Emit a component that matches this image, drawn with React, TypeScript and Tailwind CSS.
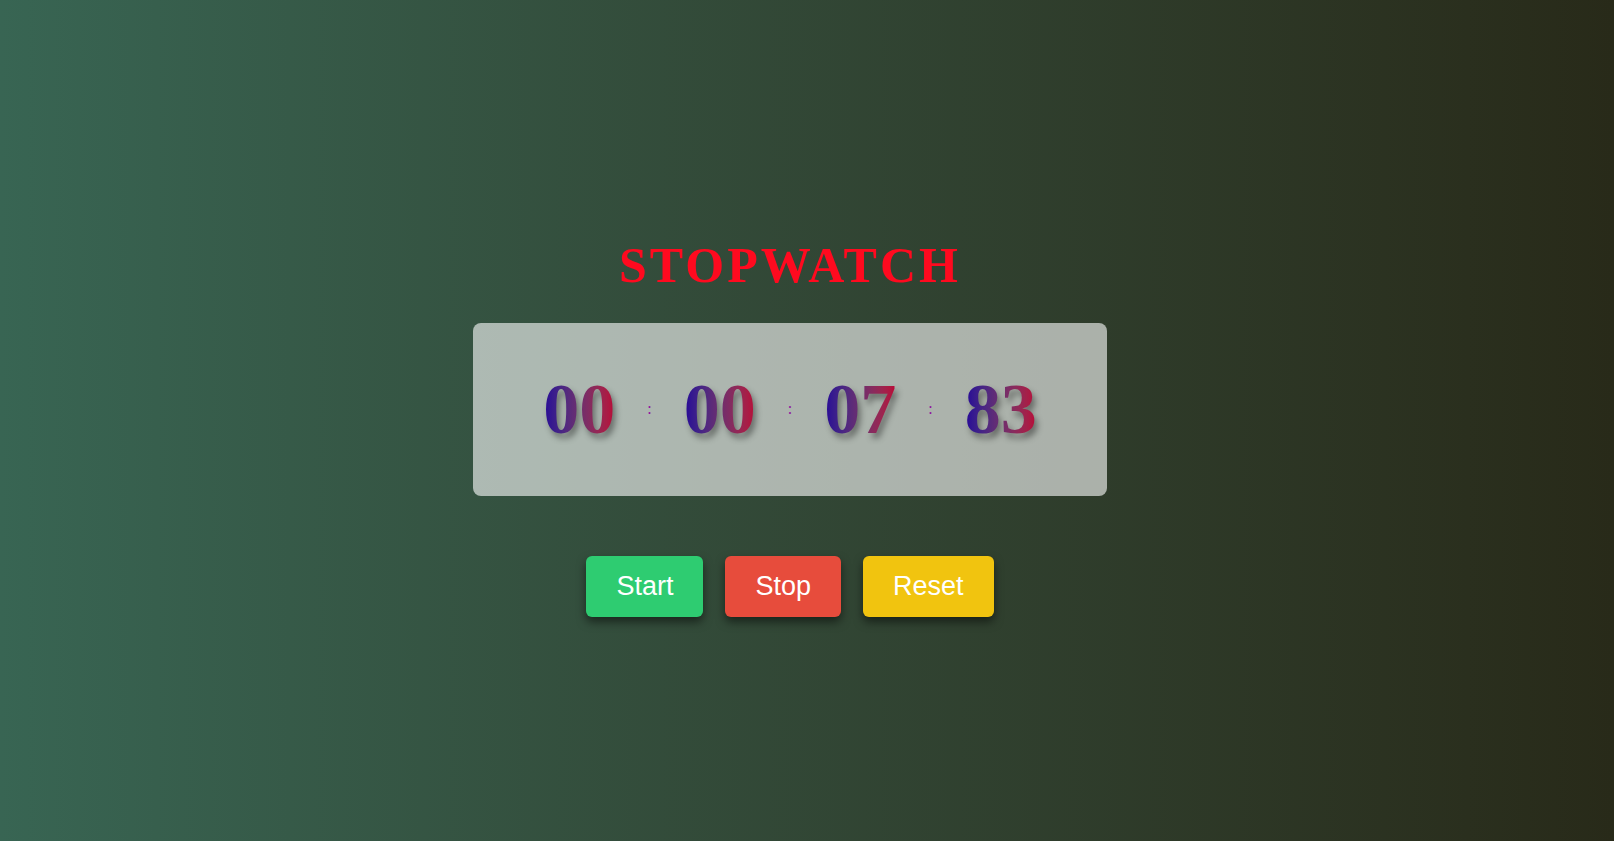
import React from "react";

const groups = ["00", "00", "07", "83"];

function Digits({ v }: { v: string }) {
  return (
    <span className="[filter:drop-shadow(3px_5px_3px_rgba(0,0,0,0.4))]">
      <span className="bg-gradient-to-r from-[#260098] to-[#bb0034] bg-clip-text text-transparent text-[72px] font-bold leading-none [font-family:'Liberation_Serif','Times_New_Roman',serif]">
        {v}
      </span>
    </span>
  );
}

export default function App() {
  return (
    <div className="min-h-screen w-full bg-gradient-to-r from-[#386553] to-[#282a19] flex flex-col items-center justify-center pt-[14px] pr-[34px]">
      <h1 className="text-[50px] font-bold tracking-[3px] text-[#ff0a1f] leading-[1.1] [font-family:'Liberation_Serif','Times_New_Roman',serif]">
        STOPWATCH
      </h1>
      <div className="mt-[30px] w-[634px] h-[173px] rounded-[8px] bg-white/60 flex items-center justify-center gap-[32px]">
        {groups.map((g, i) => (
          <React.Fragment key={i}>
            {i > 0 && (
              <span className="text-[16px] text-[#9010a0] [font-family:'Liberation_Serif',serif]">:</span>
            )}
            <Digits v={g} />
          </React.Fragment>
        ))}
      </div>
      <div className="mt-[60px] flex gap-[22px] [font-family:'Liberation_Sans',Arial,sans-serif]">
        <button className="bg-[#2ecc71] text-white text-[27px] px-[30px] py-[15px] rounded-[6px] leading-[1.15] shadow-[0_5px_10px_rgba(0,0,0,0.5)]">
          Start
        </button>
        <button className="bg-[#e74c3c] text-white text-[27px] px-[30px] py-[15px] rounded-[6px] leading-[1.15] shadow-[0_5px_10px_rgba(0,0,0,0.5)]">
          Stop
        </button>
        <button className="bg-[#f1c40f] text-white text-[27px] px-[30px] py-[15px] rounded-[6px] leading-[1.15] shadow-[0_5px_10px_rgba(0,0,0,0.5)]">
          Reset
        </button>
      </div>
    </div>
  );
}
